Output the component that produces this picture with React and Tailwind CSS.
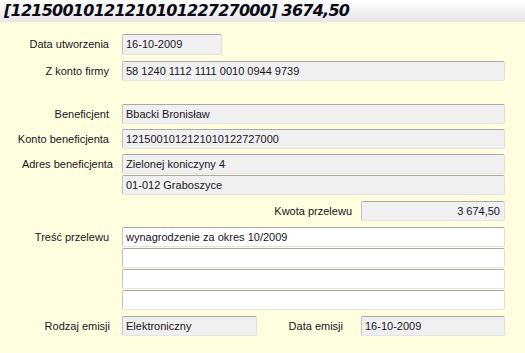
import React from 'react';

const box =
  'h-5 flex items-center pl-[3px] rounded-[2px] border border-[#c2c2c2] border-t-[#a9a9a9] border-b-[#e4e4e4] border-r-[#dedede] overflow-hidden whitespace-nowrap';

function Field({ value, white, right, className = '' }) {
  return (
    <div
      className={`${box} ${white ? 'bg-white' : 'bg-[#f0f0f0]'} ${right ? 'justify-end pr-[4px]' : ''} ${className}`}
    >
      {value}
    </div>
  );
}

function Row({ label, pr = 'pr-[13px]', mt, children }) {
  return (
    <div className={`flex items-center ${mt}`}>
      <div className={`w-[122px] shrink-0 text-right ${pr}`}>{label}</div>
      {children}
    </div>
  );
}

export default function App() {
  return (
    <div
      className="w-[525px] h-[353px] bg-[#ffffe0] text-[11px] text-[#1a1424] overflow-hidden"
      style={{ fontFamily: '"Liberation Sans", Arial, sans-serif' }}
    >
      <div className="h-[22px] bg-gradient-to-b from-white to-[#e6e6e6] flex items-center pl-1">
        <span
          className="font-bold italic text-[16px] tracking-[-0.75px] text-[#0b0b16] leading-none"
          style={{ fontFamily: '"DejaVu Sans", Verdana, sans-serif' }}
        >
          [1215001012121010122727000] 3674,50
        </span>
      </div>

      <Row label="Data utworzenia" mt="mt-[12px]">
        <Field value="16-10-2009" className="w-[100px] h-[21px]" />
      </Row>
      <Row label="Z konto firmy" mt="mt-[6px]">
        <Field value="58 1240 1112 1111 0010 0944 9739" className="w-[383px]" />
      </Row>

      <Row label="Beneficjent" mt="mt-[23px]">
        <Field value="Bbacki Bronisław" className="w-[383px]" />
      </Row>
      <Row label="Konto beneficjenta" mt="mt-[5px]">
        <Field value="1215001012121010122727000" className="w-[383px]" />
      </Row>
      <Row label="Adres beneficjenta" pr="pr-[9px]" mt="mt-[5px]">
        <Field value="Zielonej koniczyny 4" className="w-[383px]" />
      </Row>
      <Row label="" mt="mt-px">
        <Field value="01-012 Graboszyce" className="w-[383px]" />
      </Row>

      <div className="flex items-center mt-[6px]">
        <div className="w-[361px] shrink-0 text-right pr-[9px]">Kwota przelewu</div>
        <Field value="3 674,50" right className="w-[144px]" />
      </div>

      <Row label="Treść przelewu" mt="mt-[6px]">
        <Field value="wynagrodzenie za okres 10/2009" white className="w-[383px]" />
      </Row>
      <Row label="" mt="mt-px">
        <Field value="" white className="w-[383px]" />
      </Row>
      <Row label="" mt="mt-px">
        <Field value="" white className="w-[383px]" />
      </Row>
      <Row label="" mt="mt-px">
        <Field value="" white className="w-[383px]" />
      </Row>

      <Row label="Rodzaj emisji" pr="pr-[12px]" mt="mt-[6px]">
        <Field value="Elektroniczny" className="w-[135px]" />
        <div className="w-[104px] shrink-0 text-right pr-[18px]">Data emisji</div>
        <Field value="16-10-2009" className="w-[144px]" />
      </Row>
    </div>
  );
}
